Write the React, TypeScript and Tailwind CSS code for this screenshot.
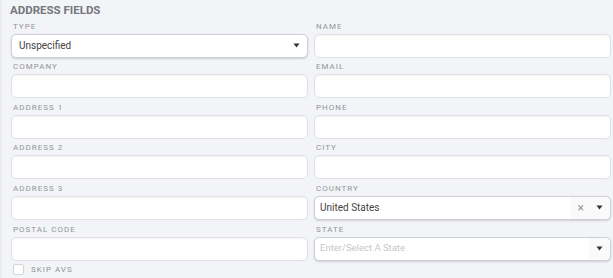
import React from "react";

const Label = ({ children }: { children: React.ReactNode }) => (
  <div className="h-[16.6px] flex items-end pb-[3px] pl-[2px] text-[8px] leading-none tracking-[1px] text-[#929499] uppercase">
    {children}
  </div>
);

const Caret = () => (
  <svg width="7" height="5" viewBox="0 0 7 5" className="shrink-0">
    <path d="M0.5 0.5 L6.5 0.5 L3.5 4.5 Z" fill="#333" />
  </svg>
);

const Input = ({ children, strong }: { children?: React.ReactNode; strong?: boolean }) => (
  <div
    className={
      "h-[24px] rounded-[5px] bg-white flex items-center " +
      (strong
        ? "border border-[#cdd0d4] shadow-[0_1px_2px_rgba(0,0,0,0.16)]"
        : "border border-[#dfe1e5] shadow-[inset_0_1px_2px_rgba(0,0,0,0.05)]")
    }
  >
    {children}
  </div>
);

const Field = ({ label, children, strong }: { label: string; children?: React.ReactNode; strong?: boolean }) => (
  <div className="flex flex-col">
    <Label>{label}</Label>
    <Input strong={strong}>{children}</Input>
  </div>
);

export default function App() {
  return (
    <div
      className="w-[613px] h-[278px] bg-[#f3f4f7] border-l-[2px] border-[#eaebee] overflow-hidden"
      style={{ fontFamily: "Roboto, 'Liberation Sans', sans-serif" }}
    >
      <div className="pl-[8px] pt-[3px] h-[17px] text-[11.5px] font-bold leading-[14px] text-[#74777d]">
        ADDRESS FIELDS
      </div>
      <div className="grid grid-cols-2 gap-x-[6px] pl-[9px] pr-[2px]">
        <Field label="Type" strong>
          <span className="flex-1 pl-[7px] text-[10px] text-[#444]">Unspecified</span>
          <span className="pr-[7px]">
            <Caret />
          </span>
        </Field>
        <Field label="Name" />
        <Field label="Company" />
        <Field label="Email" />
        <Field label="Address 1" />
        <Field label="Phone" />
        <Field label="Address 2" />
        <Field label="City" />
        <Field label="Address 3" />
        <Field label="Country" strong>
          <span className="flex-1 pl-[5px] text-[10px] text-[#444]">United States</span>
          <span className="h-full flex items-center pl-[8px] pr-[5px] bg-[#fafafa] text-[#999] text-[12px] leading-none">×</span>
          <span className="h-full flex items-center px-[7px] bg-[#fafafa] rounded-r-[5px]">
            <Caret />
          </span>
        </Field>
        <Field label="Postal Code" />
        <Field label="State" strong>
          <span className="flex-1 pl-[5px] text-[9.5px] text-[#c5c7cb]">Enter/Select A State</span>
          <span className="h-full flex items-center px-[7px] bg-[#fafafa] rounded-r-[5px]">
            <Caret />
          </span>
        </Field>
      </div>
      <div className="flex items-center pl-[11px] pt-[3px]">
        <div className="w-[11px] h-[11px] rounded-[2px] border border-[#d3d5d9] bg-white" />
        <span className="ml-[7px] text-[8px] tracking-[1px] text-[#929499]">SKIP AVS</span>
      </div>
    </div>
  );
}
